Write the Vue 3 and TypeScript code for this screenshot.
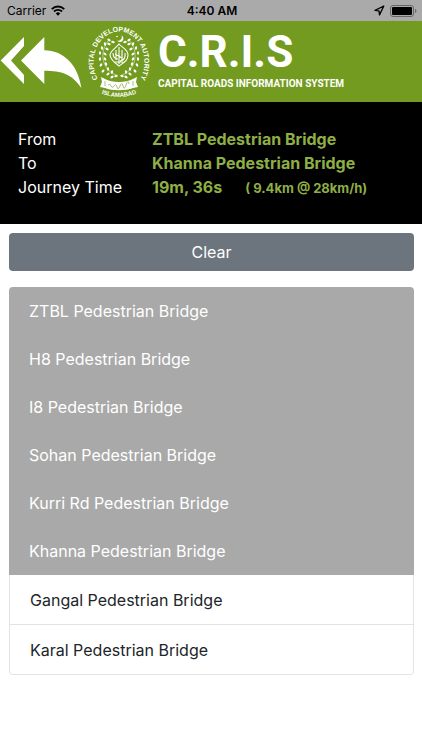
<script setup lang="ts">
import { ref } from 'vue'

interface Stop {
  name: string
  onRoute: boolean
}

const trip = {
  from: 'ZTBL Pedestrian Bridge',
  to: 'Khanna Pedestrian Bridge',
  time: '19m, 36s',
  detail: '( 9.4km @ 28km/h)',
}

const stops = ref<Stop[]>([
  { name: 'ZTBL Pedestrian Bridge', onRoute: true },
  { name: 'H8 Pedestrian Bridge', onRoute: true },
  { name: 'I8 Pedestrian Bridge', onRoute: true },
  { name: 'Sohan Pedestrian Bridge', onRoute: true },
  { name: 'Kurri Rd Pedestrian Bridge', onRoute: true },
  { name: 'Khanna Pedestrian Bridge', onRoute: true },
  { name: 'Gangal Pedestrian Bridge', onRoute: false },
  { name: 'Karal Pedestrian Bridge', onRoute: false },
])

function clearRoute(): void {
  stops.value.forEach((stop) => (stop.onRoute = false))
}

// Leaves of the wreath: position and tilt, mirrored for the right half.
const leaves = [
  { x: -3, y: 14, r: 70 }, { x: -7, y: 10, r: 10 }, { x: -7, y: 15, r: 60 },
  { x: -11, y: 7, r: 0 }, { x: -11, y: 12, r: 50 }, { x: -16, y: 9, r: 40 },
  { x: -13, y: 2, r: -20 }, { x: -18, y: 3, r: 30 }, { x: -14, y: -3, r: -30 },
  { x: -19, y: -3, r: 10 }, { x: -14, y: -8, r: -50 }, { x: -19, y: -9, r: 0 },
  { x: -12, y: -13, r: -60 }, { x: -17, y: -14, r: -10 }, { x: -10, y: -18, r: -70 },
  { x: -14, y: -18, r: -20 }, { x: -10, y: -22, r: -60 }, { x: -6, y: -20, r: -80 },
]
</script>

<template>
  <div class="screen">
    <div class="status">
      <div class="status-side">
        <span>Carrier</span>
        <svg width="14" height="11" viewBox="0 0 14 11" aria-hidden="true">
          <path d="M.8 4.1a8.9 8.9 0 0 1 12.4 0" fill="none" stroke="#000" stroke-width="2" />
          <path d="M3 6.5a5.8 5.8 0 0 1 8 0" fill="none" stroke="#000" stroke-width="1.8" />
          <path d="M4.8 8.4a3.2 3.2 0 0 1 4.4 0L7 10.8z" />
        </svg>
      </div>
      <strong class="clock">4:40 AM</strong>
      <div class="status-side end">
        <svg width="11" height="11" viewBox="0 0 11 11" aria-hidden="true">
          <path d="M9.8 1 1 5.4l4 .5.5 4z" fill="none" stroke="#000" stroke-width="1.3" stroke-linejoin="round" />
        </svg>
        <svg width="27" height="12" viewBox="0 0 27 12" aria-hidden="true">
          <rect x=".5" y=".5" width="23" height="11" rx="2.5" fill="none" stroke="#666" />
          <rect x="2" y="2" width="20" height="8" rx="1" />
          <path d="M25 4v4q1.500-.6 1.500-2T25 4" fill="#666" />
        </svg>
      </div>
    </div>

    <header class="brand">
      <button class="back" type="button" aria-label="Back">
        <svg width="82" height="54" viewBox="0 0 82 54" fill="#fff" aria-hidden="true">
          <path d="M.7 25.500 24 2v9L11 25.500 24 40v9z" />
          <path d="M21 25.500 44.300 2v13.300C63 15.500 78 29 81.300 53 72 39 62 35.700 44.300 35.700V49z" />
        </svg>
      </button>
      <svg class="seal" width="62" height="76" viewBox="-31 -38 62 76" role="img" aria-label="Capital Development Authority seal">
        <defs>
          <path id="seal-top" d="M-20 19A25.500 30.500 0 1 1 20 19" />
          <path id="seal-bottom" d="M-22 29.500Q0 40.500 22 29.500" />
        </defs>
        <text class="seal-text ring"><textPath href="#seal-top" startOffset="50%" text-anchor="middle">CAPITAL DEVELOPMENT AUTORITY</textPath></text>
        <text class="seal-text"><textPath href="#seal-bottom" startOffset="50%" text-anchor="middle">ISLAMABAD</textPath></text>
        <g v-for="side in [1, -1]" :key="side" :transform="`scale(${side} 1)`" fill="#fff">
          <path d="M-3 13C-17 8-20-10-11-21" fill="none" stroke="#fff" stroke-width=".5" />
          <ellipse v-for="(leaf, i) in leaves" :key="i" rx="1.100" ry="1.800" :transform="`translate(${leaf.x} ${leaf.y}) rotate(${leaf.r})`" />
        </g>
        <path d="M2.600-26.500A3.500 3.500 0 1 1-2-21.500 3.800 3.800 0 0 0 2.600-26.500" fill="#fff" />
        <circle cx="-2" cy="-25.500" r=".8" fill="#fff" />
        <g fill="none" stroke="#fff" stroke-width="1.100">
          <path d="M0-18C2-15 9-13 9-7S4 1 0 4C-4 1-9-3-9-7S-2-15 0-18z" />
          <path d="M0-15V2M-6-9Q-6-3-1-3M-3-12V-2M3-12V-2M1-1Q7-2 6-9M-4 0H4M-4-8 3-4" />
        </g>
        <path d="M-18 15-14 17C-7 21 7 21 14 17L18 15 17 20 19 25 14 26C7 29-7 29-14 26L-19 25-17 20z" fill="#fff" />
        <path d="M-14 19v5M14 19v5M-11 23q2-2 3 1t3 0 3 1 3-1 3 0 3-1 3-1" fill="none" stroke="#729b20" stroke-width=".6" />
      </svg>
      <div class="names">
        <h1>C.R.I.S</h1>
        <p>CAPITAL ROADS INFORMATION SYSTEM</p>
      </div>
    </header>

    <dl class="trip">
      <dt>From</dt>
      <dd>{{ trip.from }}</dd>
      <dt>To</dt>
      <dd>{{ trip.to }}</dd>
      <dt>Journey Time</dt>
      <dd>{{ trip.time }}<small>{{ trip.detail }}</small></dd>
    </dl>

    <main>
      <button class="clear" type="button" @click="clearRoute">Clear</button>
      <ul class="stops">
        <li v-for="stop in stops" :key="stop.name" :class="{ chosen: stop.onRoute }">{{ stop.name }}</li>
      </ul>
    </main>
  </div>
</template>

<style>
body {
  margin: 0;
  background: #fff;
}
</style>

<style scoped>
.screen {
  font-family: Inter, Roboto, "Liberation Sans", sans-serif;
  font-size: 16px;
  line-height: 24px;
  color: #212529;
}
.status {
  display: grid;
  grid-template-columns: 1fr auto 1fr;
  align-items: center;
  height: 21px;
  padding: 0 5px 0 7px;
  background: #aaa;
  color: #000;
  font-size: 12px;
  line-height: 21px;
}
.status-side {
  display: flex;
  align-items: center;
  gap: 5px;
}
.end {
  justify-content: flex-end;
}
.clock {
  font-weight: 600;
}
.brand {
  display: flex;
  align-items: center;
  height: 81px;
  background: #729b20;
  color: #fff;
}
.back {
  display: flex;
  padding: 0;
  border: 0;
  background: none;
  cursor: pointer;
}
.seal {
  margin-left: 6px;
}
.seal-text {
  font: bold 6px "Liberation Sans", sans-serif;
  fill: #fff;
}
.ring {
  font-size: 7px;
}
.names {
  margin-left: 8px;
  font-family: Roboto, "Liberation Sans", Arial, sans-serif;
  font-weight: bold;
}
.names h1 {
  margin: 0;
  font-size: 44px;
  line-height: 44px;
}
.names p {
  margin: 0;
  font-size: 10px;
  line-height: 20px;
  white-space: nowrap;
}
.trip {
  display: grid;
  grid-template-columns: 134px 1fr;
  margin: 0;
  padding: 25px 18px;
  background: #000;
  color: #fff;
}
.trip dd {
  margin: 0;
  color: #8fae45;
  font-weight: 700;
}
.trip small {
  margin-left: 23px;
  font-size: 13px;
  line-height: 1;
}
main {
  padding: 9px 8px 0 9px;
}
.clear {
  display: block;
  width: 100%;
  height: 38px;
  padding: 0;
  border: 0;
  border-radius: 4px;
  background: #6c757d;
  color: #fff;
  font: inherit;
  cursor: pointer;
}
.stops {
  margin: 16px 0 0;
  padding: 0;
  list-style: none;
  border-radius: 4px;
  overflow: hidden;
}
.stops li {
  padding: 13px 20px 12px;
  border: 1px solid #e3e3e3;
  border-top: 0;
}
.stops li:last-child {
  border-radius: 0 0 4px 4px;
}
.stops .chosen {
  padding: 12px 20px;
  border: 0;
  background: #a9a9a9;
  color: #fff;
}
</style>
